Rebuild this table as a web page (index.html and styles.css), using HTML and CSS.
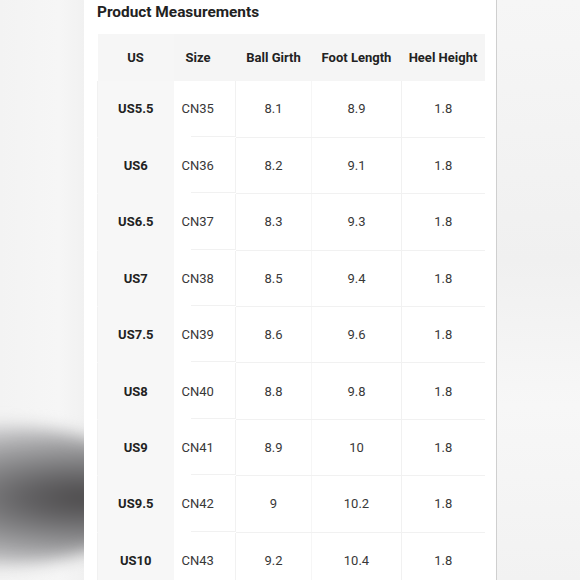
FILE: index.html
```html
<!DOCTYPE html>
<html lang="en">
<head>
<meta charset="utf-8">
<title>Product Measurements</title>
<link rel="stylesheet" href="styles.css">
</head>
<body>
<div class="page">
  <div class="side side-left"><div class="blob"></div></div>
  <main class="panel">
    <h2 class="title">Product Measurements</h2>
    <table class="sizes">
      <colgroup>
        <col class="c-us"><col class="c-size"><col class="c-ball"><col class="c-foot"><col class="c-heel">
      </colgroup>
      <thead>
        <tr><th class="fixed">US</th><th>Size</th><th>Ball Girth</th><th>Foot Length</th><th>Heel Height</th></tr>
      </thead>
      <tbody>
        <tr><td class="fixed">US5.5</td><td class="cn">CN35</td><td>8.1</td><td>8.9</td><td>1.8</td></tr>
        <tr><td class="fixed">US6</td><td class="cn">CN36</td><td>8.2</td><td>9.1</td><td>1.8</td></tr>
        <tr><td class="fixed">US6.5</td><td class="cn">CN37</td><td>8.3</td><td>9.3</td><td>1.8</td></tr>
        <tr><td class="fixed">US7</td><td class="cn">CN38</td><td>8.5</td><td>9.4</td><td>1.8</td></tr>
        <tr><td class="fixed">US7.5</td><td class="cn">CN39</td><td>8.6</td><td>9.6</td><td>1.8</td></tr>
        <tr><td class="fixed">US8</td><td class="cn">CN40</td><td>8.8</td><td>9.8</td><td>1.8</td></tr>
        <tr><td class="fixed">US9</td><td class="cn">CN41</td><td>8.9</td><td>10</td><td>1.8</td></tr>
        <tr><td class="fixed">US9.5</td><td class="cn">CN42</td><td>9</td><td>10.2</td><td>1.8</td></tr>
        <tr><td class="fixed">US10</td><td class="cn">CN43</td><td>9.2</td><td>10.4</td><td>1.8</td></tr>
      </tbody>
    </table>
  </main>
  <div class="side side-right"></div>
</div>
</body>
</html>
```
FILE: styles.css
```css
* { box-sizing: border-box; }
html, body { margin: 0; padding: 0; }
body {
  width: 580px;
  height: 580px;
  overflow: hidden;
  font-family: Roboto, "Liberation Sans", sans-serif;
  background: #f4f4f4;
}
.page {
  display: flex;
  width: 580px;
  height: 580px;
}
.side {
  flex: 0 0 84px;
  height: 580px;
  position: relative;
  overflow: hidden;
}
.side-left {
  background: linear-gradient(to right, #f3f3f3, #f6f6f6 70%, #f1f1f1);
}
.blob {
  position: absolute;
  left: -150px;
  top: 425px;
  width: 300px;
  height: 140px;
  border-radius: 50%;
  background: radial-gradient(ellipse at 78% 52%, #4c4a4b 0%, #626163 18%, #8b8b8d 40%, #b4b4b6 60%, rgba(225,225,227,0.7) 80%, rgba(244,244,244,0) 100%);
  filter: blur(8px);
}
.side-right {
  flex: 0 0 84px;
  background: linear-gradient(to bottom, #f6f6f6, #f0f0f0 45%, #f7f7f7 70%, #f2f2f2);
}
.panel {
  flex: 0 0 412px;
  height: 580px;
  background: #fff;
  border-right: 1px solid #cfcfcf;
  padding: 0 11px 0 13px;
}
.title {
  margin: 0;
  padding-top: 3px;
  height: 34px;
  font-size: 15.4px;
  font-weight: 700;
  color: #222;
  line-height: 18px;
}
.sizes {
  border-collapse: collapse;
  table-layout: fixed;
  width: 387px;
  font-size: 13px;
  color: #383838;
}
.c-us { width: 76px; }
.c-size { width: 62px; }
.c-ball { width: 76px; }
.c-foot { width: 90px; }
.c-heel { width: 83px; }
.sizes th {
  height: 47px;
  background: #f5f5f5;
  font-weight: 700;
  color: #222;
  text-align: center;
  padding: 0;
}
.sizes th:nth-child(2) { text-align: left; padding-left: 12px; }
.sizes td {
  height: 56.4px;
  text-align: center;
  padding: 0;
  border-bottom: 1px solid #f1f1f1;
  border-left: 1px solid #f1f1f1;
}
.sizes td:nth-child(4) { border-left-color: #f6f6f6; }
.sizes td.cn {
  text-align: left;
  padding-left: 8px;
  border-left: none;
  border-bottom-color: transparent;
  background: linear-gradient(#f1f1f1, #f1f1f1) no-repeat right bottom / calc(100% - 17px) 1px;
}
.sizes .fixed {
  background: #f7f7f7;
  font-weight: 700;
  color: #222;
  border-bottom-color: #f7f7f7;
  position: relative;
  z-index: 1;
  box-shadow: 8px 0 12px -6px rgba(0,0,0,0.07);
}
.sizes th.fixed { background: #f6f6f6; }
```
